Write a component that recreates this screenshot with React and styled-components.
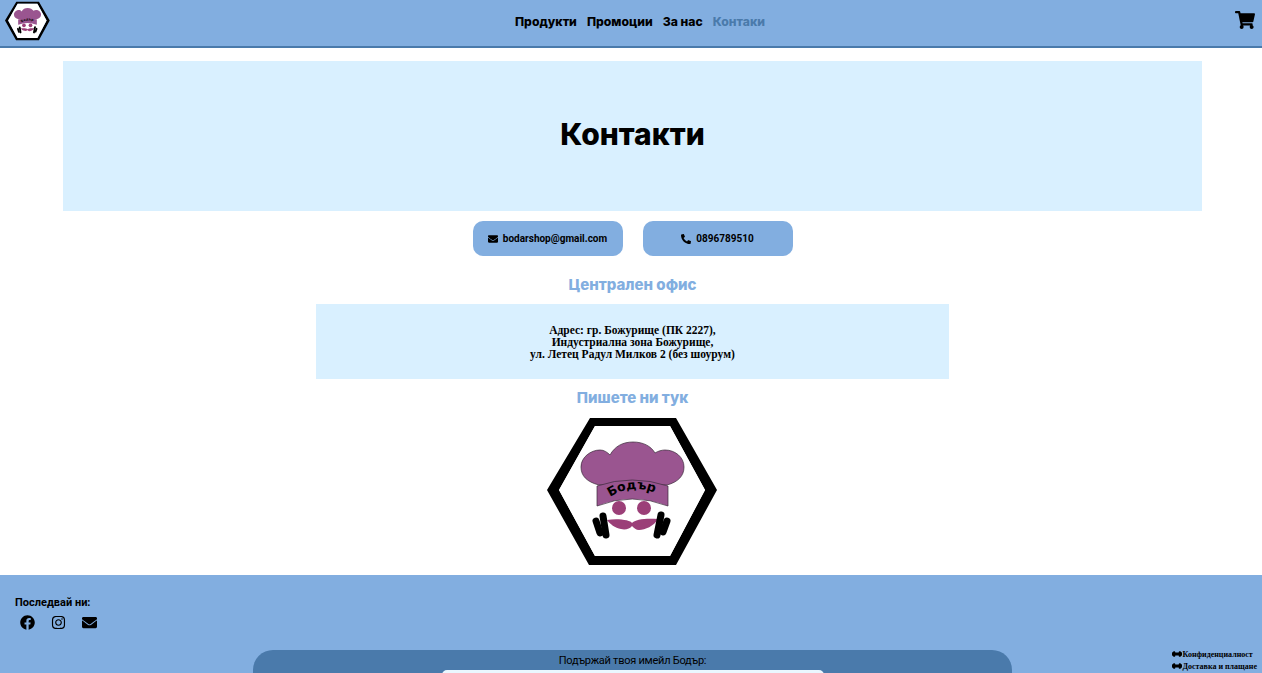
import React from "react";
import styled, { createGlobalStyle } from "styled-components";
import { FaEnvelope, FaPhoneAlt, FaShoppingCart, FaFacebook, FaInstagram, FaArrowsAltH } from "react-icons/fa";

const Global = createGlobalStyle`
  html, body { margin: 0; padding: 0; height: 100%; overflow: hidden; background: #fff; }
  #root { height: 100vh; overflow: hidden; }
  * { box-sizing: border-box; }
`;

const Nav = styled.nav`
  display: grid;
  grid-template-columns: 1fr auto 1fr;
  align-items: center;
  height: 48px;
  padding: 0 7px 0 5px;
  background: #82aee0;
  border-bottom: 2px solid #4a7aab;
`;

const LogoLink = styled.a`
  display: flex;
  align-self: start;
  padding-top: 1px;
`;

const Links = styled.div`
  display: flex;
  gap: 10px;
  margin-left: 20px;
  padding-bottom: 4px;
`;

const NavLink = styled.a`
  font-family: "Inter", sans-serif;
  font-weight: 800;
  font-size: 12.2px;
  color: ${(p) => (p.$active ? "#4a7aab" : "#000")};
`;

const Cart = styled.a`
  justify-self: end;
  display: flex;
  padding-bottom: 7px;
  font-size: 20px;
  color: #000;
`;

const Main = styled.main`
  display: flex;
  flex-direction: column;
  align-items: center;
  padding: 13px 0 0 3px;
`;

const Hero = styled.section`
  display: flex;
  align-items: center;
  justify-content: center;
  width: 1139px;
  height: 150px;
  padding-bottom: 5px;
  background: #d9f0ff;
`;

const Title = styled.h1`
  margin: 0;
  font-family: "Inter", sans-serif;
  font-weight: 800;
  font-size: 30px;
  color: #000;
`;

const Buttons = styled.div`
  display: flex;
  gap: 20px;
  margin-top: 10px;
`;

const Contact = styled.a`
  display: flex;
  align-items: center;
  justify-content: center;
  gap: 5px;
  width: 150px;
  height: 35px;
  border-radius: 10px;
  background: #82aee0;
  font-family: "Roboto", sans-serif;
  font-weight: 700;
  font-size: 10px;
  color: #000;
`;

const Heading = styled.h3`
  margin: ${(p) => p.$top}px 0 0;
  font-family: "Inter", sans-serif;
  font-weight: 800;
  font-size: 15px;
  line-height: 18px;
  color: #82aee0;
`;

const Office = styled.div`
  display: flex;
  flex-direction: column;
  align-items: center;
  justify-content: center;
  width: 633px;
  height: 75px;
  margin-top: 10px;
  padding-top: 1px;
  background: #d9f0ff;
  font-family: "Liberation Serif", serif;
  font-weight: 700;
  font-size: 11.5px;
  line-height: 12px;
  color: #000;
`;

const BigLogo = styled.div`
  display: flex;
  margin-top: 9px;
  margin-bottom: 8px;
`;

const Footer = styled.footer`
  display: grid;
  grid-template-columns: 253px 759px 1fr;
  grid-template-rows: 75px auto;
  background: #82aee0;
  height: 200px;
`;

const Follow = styled.div`
  grid-column: 1 / -1;
  padding: 22px 0 0 15px;
`;

const FollowTitle = styled.div`
  font-family: "Roboto", sans-serif;
  font-weight: 700;
  font-size: 11px;
  line-height: 12px;
  color: #000;
`;

const Socials = styled.div`
  display: flex;
  gap: 16px;
  margin-top: 6px;
  padding-left: 5px;
  font-size: 15px;
  color: #000;
`;

const Newsletter = styled.div`
  grid-column: 2;
  display: flex;
  flex-direction: column;
  align-items: center;
  border-radius: 20px 20px 0 0;
  background: #4a7aab;
  padding-top: 4px;
`;

const NewsTitle = styled.div`
  font-family: "Roboto", sans-serif;
  font-size: 11px;
  letter-spacing: -0.25px;
  line-height: 14px;
  color: #000;
`;

const Input = styled.div`
  width: 382px;
  height: 30px;
  margin-top: 2px;
  border-radius: 5px;
  background: #eaf7ff;
`;

const Policies = styled.div`
  grid-column: 3;
  justify-self: end;
  display: flex;
  flex-direction: column;
  align-items: flex-start;
  margin-top: -2px;
  padding-right: 5px;
`;

const Policy = styled.a`
  display: flex;
  align-items: center;
  height: 12px;
  font-family: "Liberation Serif", serif;
  font-weight: 700;
  font-size: 8px;
  color: #000;

  svg {
    width: 10px;
    height: 10px;
    stroke: currentColor;
    stroke-width: 70;
  }
`;

function Logo({ width, height, small }) {
  const line = small ? 0 : 0.7;
  const arc = small ? "arcS" : "arcB";
  return (
    <svg width={width} height={height} viewBox="0 0 171 151">
      <path
        fillRule="evenodd"
        fill="#000"
        d="M43 2H129L170 74L129 149H42L0 74ZM48 10L12 74L48 140H123L158 74L123 10Z"
      />
      <path fill="#fff" d="M48 10L12 74L48 140H123L158 74L123 10Z" />
      <path
        fill="#9a5590"
        stroke="#3a2a3a"
        strokeWidth={line}
        d="M52 69C40 66 34 60 34 51C34 41 44 34 53 34C57 34 60 36 63 39C68 30 76 26 86 26C96 26 104 30 108 37C111 35 115 34 118 34C128 34 137 41 137 51C137 60 131 66 120 69Z"
      />
      <path fill="#9a5590" stroke="#3a2a3a" strokeWidth={line} d="M50 70Q85 58 121 70V90Q85 76 50 90Z" />
      <path id={arc} fill="none" d="M63 81Q86 66 113 79" />
      <text fontFamily="'DejaVu Sans', sans-serif" fontWeight="700" fontSize="12.5" fill="#000">
        <textPath href={"#" + arc}>Бодър</textPath>
      </text>
      <circle cx="72" cy="92" r="7" fill="#9b3f78" />
      <circle cx="97" cy="92" r="7" fill="#9b3f78" />
      <path
        fill="#9b3f78"
        d="M60 104C70 102 84 104 85 107C88 103 100 102 111 103C107 110 98 114 92 114C89 114 87 112 85 110C83 113 78 114 74 113C68 112 63 108 60 104Z"
      />
      <g stroke="#000" strokeWidth="7" strokeLinecap="round">
        <path d="M49 105L53 117" />
        <path d="M56 100L59 119" />
        <path d="M114 99L110 119" />
        <path d="M120 105L116 116" />
      </g>
    </svg>
  );
}

export default function App() {
  return (
    <>
      <Global />
      <Nav>
        <LogoLink>
          <Logo width={45} height={40} small />
        </LogoLink>
        <Links>
          <NavLink>Продукти</NavLink>
          <NavLink>Промоции</NavLink>
          <NavLink>За нас</NavLink>
          <NavLink $active>Контаки</NavLink>
        </Links>
        <Cart>
          <FaShoppingCart />
        </Cart>
      </Nav>
      <Main>
        <Hero>
          <Title>Контакти</Title>
        </Hero>
        <Buttons>
          <Contact>
            <FaEnvelope />
            bodarshop@gmail.com
          </Contact>
          <Contact>
            <FaPhoneAlt />
            0896789510
          </Contact>
        </Buttons>
        <Heading $top={20}>Централен офис</Heading>
        <Office>
          <div>Адрес: гр. Божурище (ПК 2227),</div>
          <div>Индустриална зона Божурище,</div>
          <div>ул. Летец Радул Милков 2 (без шоурум)</div>
        </Office>
        <Heading $top={10}>Пишете ни тук</Heading>
        <BigLogo>
          <Logo width={171} height={151} />
        </BigLogo>
      </Main>
      <Footer>
        <Follow>
          <FollowTitle>Последвай ни:</FollowTitle>
          <Socials>
            <FaFacebook />
            <FaInstagram />
            <FaEnvelope />
          </Socials>
        </Follow>
        <Newsletter>
          <NewsTitle>Подържай твоя имейл Бодър:</NewsTitle>
          <Input />
        </Newsletter>
        <Policies>
          <Policy>
            <FaArrowsAltH />
            Конфиденциалност
          </Policy>
          <Policy>
            <FaArrowsAltH />
            Доставка и плащане
          </Policy>
        </Policies>
      </Footer>
    </>
  );
}
